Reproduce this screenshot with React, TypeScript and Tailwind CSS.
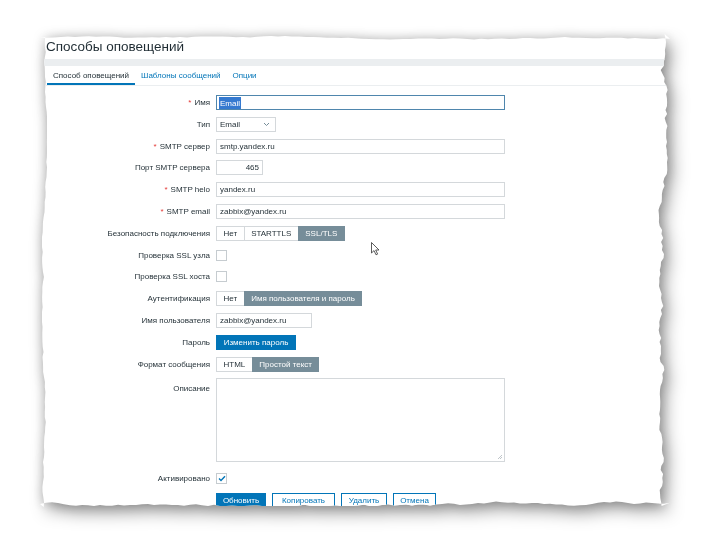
import type { ReactNode } from 'react';

// jagged "torn paper" outline, generated once from a fixed seed
function tornEdge(w: number, h: number) {
  let seed = 11;
  const rnd = () => {
    seed = (seed * 9301 + 49297) % 233280;
    return seed / 233280;
  };
  const pts: string[] = [];
  let t = 3;
  for (let x = 0; x <= w; x += 7) {
    t = Math.min(6, Math.max(2, t + (rnd() - 0.5) * 1.4));
    pts.push(`${x}px ${t.toFixed(1)}px`);
  }
  let r = w - 5;
  for (let y = 0; y <= h; y += 4) {
    r = Math.min(w - 2, Math.max(w - 10, r + (rnd() - 0.5) * 4));
    pts.push(`${(r - rnd() * 1.5).toFixed(1)}px ${y}px`);
  }
  let b = h - 3;
  for (let x = w; x >= 0; x -= 6) {
    b = Math.min(h - 1, Math.max(h - 7, b + (rnd() - 0.5) * 2.5));
    pts.push(`${x}px ${b.toFixed(1)}px`);
  }
  let l = 4;
  for (let y = h; y >= 0; y -= 5) {
    l = Math.min(7, Math.max(2, l + (rnd() - 0.5) * 2));
    pts.push(`${l.toFixed(1)}px ${y}px`);
  }
  return `polygon(${pts.join(',')})`;
}

const clip = tornEdge(630, 473);

function Row({ label, req, top, children }: { label: string; req?: boolean; top?: boolean; children: ReactNode }) {
  return (
    <div className={`flex gap-[6px] ${top ? 'items-start' : 'items-center'}`}>
      <div className={`w-[170px] shrink-0 text-right leading-[15px] ${top ? 'pt-[3px]' : ''}`}>
        {req && <span className="text-[#e33734] mr-[3px]">*</span>}
        {label}
      </div>
      {children}
    </div>
  );
}

function Input({ value, w = 'w-[289px]', right }: { value: string; w?: string; right?: boolean }) {
  return (
    <div
      className={`${w} h-[15px] border border-[#d4d8db] bg-white flex items-center px-[3px] pt-[1px] leading-[12px] ${right ? 'justify-end' : ''}`}
    >
      {value}
    </div>
  );
}

function Segments({ items, active }: { items: string[]; active: number }) {
  return (
    <div className="flex h-[15px] leading-[12px]">
      {items.map((it, i) =>
        i === active ? (
          <div key={it} className="h-full px-[6.5px] pt-[1px] flex items-center bg-[#768d99] text-white border border-[#768d99]">
            {it}
          </div>
        ) : (
          <div key={it} className="h-full px-[6.5px] pt-[1px] flex items-center bg-white border border-[#d4d8db] -mr-px">
            {it}
          </div>
        )
      )}
    </div>
  );
}

function Checkbox({ checked }: { checked?: boolean }) {
  return (
    <div className="w-[11px] h-[11px] border border-[#c6ccd0] bg-white flex items-center justify-center">
      {checked && (
        <svg width="8" height="7" viewBox="0 0 8 7">
          <polyline points="1,3.5 3,5.5 7,1.2" fill="none" stroke="#0275b8" strokeWidth="1.4" />
        </svg>
      )}
    </div>
  );
}

const btn = 'h-[15px] pt-[1px] leading-[12px] flex items-center justify-center';

export default function App() {
  return (
    <div className="w-[704px] h-[544px] bg-white overflow-hidden relative font-['Liberation_Sans',Arial,sans-serif] text-[8px] text-[#1f2c33]">
      <div className="ml-[40px] mt-[34px] w-[630px] [filter:drop-shadow(0_0_6px_rgba(0,0,0,0.2))_drop-shadow(5px_7px_8px_rgba(0,0,0,0.38))]">
        <div className="w-[630px] h-[473px] bg-white overflow-hidden" style={{ clipPath: clip }}>
          <div className="h-[25px] pl-[6px] pt-[2px] flex items-center text-[13.5px] text-[#1f2c33]">
            Способы оповещений
          </div>
          <div className="h-[7px] bg-[#ebeef0]" />
          <div className="h-[20px] flex pl-[7px] border-b border-[#ebeef0]">
            <div className="px-[6px] flex items-center border-b-2 border-[#0275b8] pt-[2px]">Способ оповещений</div>
            <div className="px-[6px] flex items-center text-[#0275b8]">Шаблоны сообщений</div>
            <div className="px-[6px] flex items-center text-[#0275b8]">Опции</div>
          </div>

          <div className="pt-[9px] flex flex-col gap-[6.8px]">
            <Row label="Имя" req>
              <div className="w-[289px] h-[15px] border border-[#4f86ad] bg-white flex items-center px-[2px]">
                <span className="bg-[#3479d0] text-white px-[1px] leading-[11px] pt-[1px]">Email</span>
              </div>
            </Row>
            <Row label="Тип">
              <div className="w-[60px] h-[15px] border border-[#d4d8db] bg-white flex items-center justify-between px-[3px] pt-[1px] leading-[12px]">
                Email
                <svg width="7" height="5" viewBox="0 0 7 5" className="mr-[2px]">
                  <polyline points="1,1 3.5,3.5 6,1" fill="none" stroke="#768d99" strokeWidth="1" />
                </svg>
              </div>
            </Row>
            <Row label="SMTP сервер" req>
              <Input value="smtp.yandex.ru" />
            </Row>
            <Row label="Порт SMTP сервера">
              <Input value="465" w="w-[47px]" right />
            </Row>
            <Row label="SMTP helo" req>
              <Input value="yandex.ru" />
            </Row>
            <Row label="SMTP email" req>
              <Input value="zabbix@yandex.ru" />
            </Row>
            <Row label="Безопасность подключения">
              <Segments items={['Нет', 'STARTTLS', 'SSL/TLS']} active={2} />
            </Row>
            <Row label="Проверка SSL узла">
              <div className="h-[15px] flex items-center">
                <Checkbox />
              </div>
            </Row>
            <Row label="Проверка SSL хоста">
              <div className="h-[15px] flex items-center">
                <Checkbox />
              </div>
            </Row>
            <Row label="Аутентификация">
              <Segments items={['Нет', 'Имя пользователя и пароль']} active={1} />
            </Row>
            <Row label="Имя пользователя">
              <Input value="zabbix@yandex.ru" w="w-[96px]" />
            </Row>
            <Row label="Пароль">
              <div className={`${btn} w-[80px] bg-[#0275b8] text-white`}>Изменить пароль</div>
            </Row>
            <Row label="Формат сообщения">
              <Segments items={['HTML', 'Простой текст']} active={1} />
            </Row>
            <Row label="Описание" top>
              <div className="w-[289px] h-[84px] border border-[#d4d8db] bg-white flex items-end justify-end p-[1px]">
                <svg width="6" height="6" viewBox="0 0 6 6">
                  <path d="M5 1 L1 5 M5 3 L3 5" stroke="#b0b8bd" strokeWidth="0.8" />
                </svg>
              </div>
            </Row>
            <div className="mt-[2px]">
              <Row label="Активировано">
                <div className="h-[15px] flex items-center">
                  <Checkbox checked />
                </div>
              </Row>
            </div>
            <div className="flex gap-[6px] pl-[176px]">
              <div className={`${btn} w-[50px] bg-[#0275b8] text-white`}>Обновить</div>
              <div className={`${btn} w-[63px] border border-[#0275b8] text-[#0275b8] bg-white`}>Копировать</div>
              <div className={`${btn} w-[46px] border border-[#0275b8] text-[#0275b8] bg-white`}>Удалить</div>
              <div className={`${btn} w-[43px] border border-[#0275b8] text-[#0275b8] bg-white`}>Отмена</div>
            </div>
          </div>
        </div>
      </div>

      {/* mouse pointer */}
      <svg className="absolute left-[371px] top-[242px]" width="10" height="14" viewBox="0 0 10 14">
        <path d="M0.5 0.5 L0.5 11 L3 8.6 L5 12.8 L6.6 12.1 L4.7 8 L8 8 Z" fill="white" stroke="#333" strokeWidth="0.8" />
      </svg>
    </div>
  );
}
